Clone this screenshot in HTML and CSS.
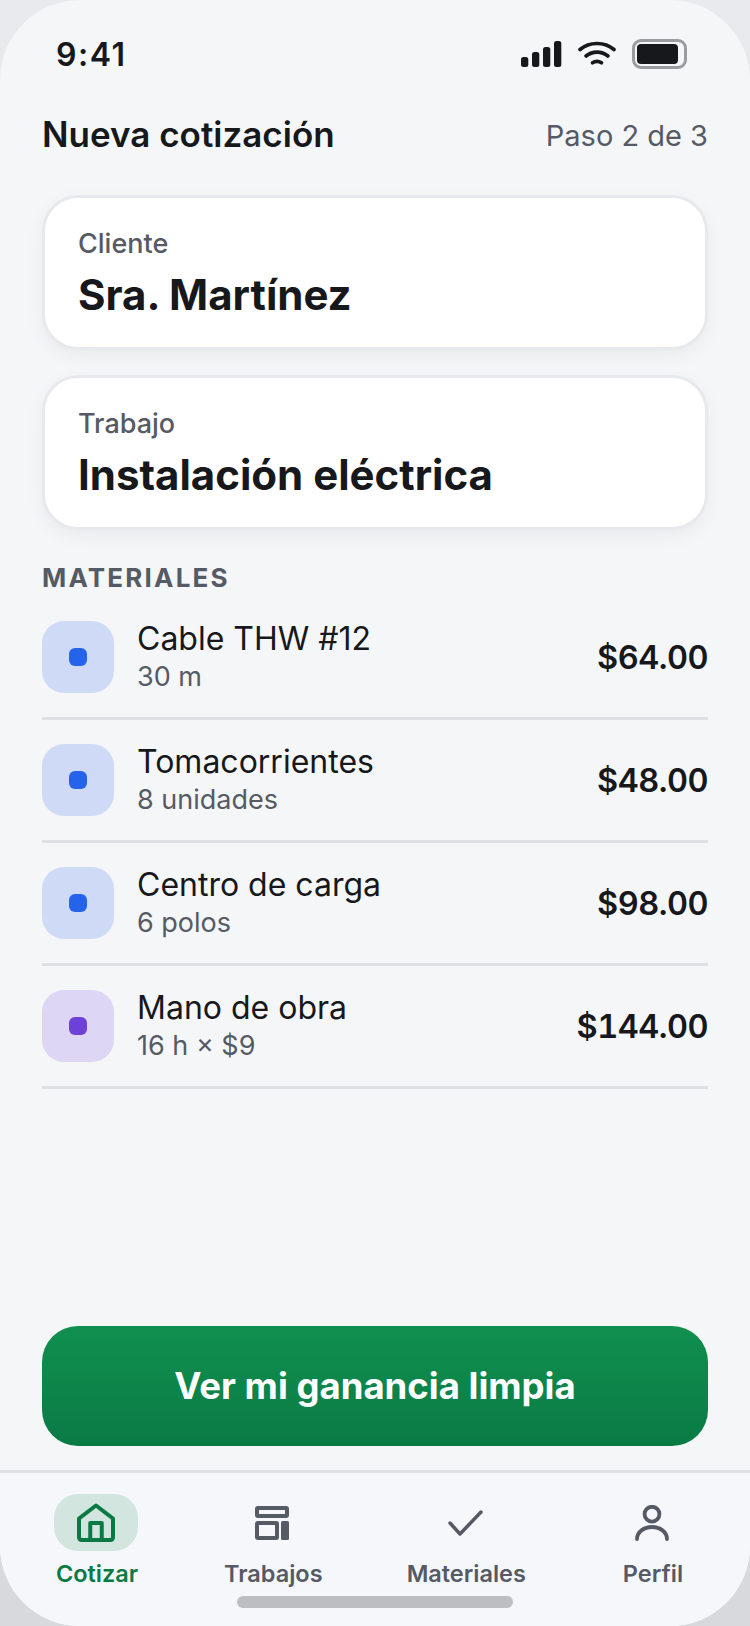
FILE: index.html

```html
<!DOCTYPE html>
<html lang="es">
<head>
    <meta charset="UTF-8">
    <meta name="viewport" content="width=device-width, initial-scale=1.0">
    <title>Nueva cotización</title>
    <link rel="stylesheet" href="styles.css">
</head>
<body>
    <div class="phone">
        <!-- Barra de estado -->
        <div class="status-bar">
            <span class="clock">9:41</span>
            <div class="status-icons">
                <svg width="42" height="26" viewBox="0 0 42 26" fill="#17181c">
                    <rect x="1" y="16" width="7.300" height="10" rx="2.500"/>
                    <rect x="12" y="11" width="7.300" height="15" rx="2.500"/>
                    <rect x="23" y="6" width="7.300" height="20" rx="2.500"/>
                    <rect x="34" y="0" width="7.300" height="26" rx="2.500"/>
                </svg>
                <svg width="38" height="26" viewBox="0 0 38 26" fill="none" stroke="#17181c" stroke-width="3.600" stroke-linecap="round">
                    <path d="M2 8.500C11.500 0.500 26.500 0.500 36 8.500"/>
                    <path d="M8 15C14.500 9.800 23.500 9.800 30 15"/>
                    <path d="M14.500 21.800C17.200 20 20.800 20 23.500 21.800"/>
                </svg>
                <div class="battery"><div class="battery-fill"></div></div>
            </div>
        </div>

        <div class="content">
            <div class="top-row">
                <h1>Nueva cotización</h1>
                <span class="step">Paso 2 de 3</span>
            </div>

            <div class="field-card">
                <div class="field-label">Cliente</div>
                <div class="field-value">Sra. Martínez</div>
            </div>
            <div class="field-card">
                <div class="field-label">Trabajo</div>
                <div class="field-value">Instalación eléctrica</div>
            </div>

            <h2>MATERIALES</h2>
            <div class="item">
                <div class="item-icon"><span class="item-dot"></span></div>
                <div class="item-text">
                    <div class="item-name">Cable THW #12</div>
                    <div class="item-sub">30 m</div>
                </div>
                <div class="item-price">$64.00</div>
            </div>
            <div class="item">
                <div class="item-icon"><span class="item-dot"></span></div>
                <div class="item-text">
                    <div class="item-name">Tomacorrientes</div>
                    <div class="item-sub">8 unidades</div>
                </div>
                <div class="item-price">$48.00</div>
            </div>
            <div class="item">
                <div class="item-icon"><span class="item-dot"></span></div>
                <div class="item-text">
                    <div class="item-name">Centro de carga</div>
                    <div class="item-sub">6 polos</div>
                </div>
                <div class="item-price">$98.00</div>
            </div>
            <div class="item">
                <div class="item-icon labor"><span class="item-dot"></span></div>
                <div class="item-text">
                    <div class="item-name">Mano de obra</div>
                    <div class="item-sub">16 h × $9</div>
                </div>
                <div class="item-price">$144.00</div>
            </div>

            <button class="main-button">Ver mi ganancia limpia</button>
        </div>

        <!-- Navegación inferior -->
        <nav class="tab-bar">
            <div class="tab active">
                <div class="tab-icon">
                    <svg width="42" height="39" viewBox="0 0 42 39" fill="none" stroke="#0a7a45" stroke-width="4" stroke-linejoin="round">
                        <path d="M21 2.500L38 15.500V34Q38 37 35 37H7Q4 37 4 34V15.500Z"/>
                        <path d="M15.250 37V20H26.750V37"/>
                    </svg>
                </div>
                <span>Cotizar</span>
            </div>
            <div class="tab">
                <div class="tab-icon">
                    <svg width="34" height="34" viewBox="0 0 34 34" fill="none" stroke="#565a65" stroke-width="4">
                        <rect x="2" y="2" width="30" height="8" rx="1"/>
                        <rect x="2" y="17" width="20" height="15" rx="1"/>
                        <rect x="26" y="15" width="8" height="19" rx="1.500" fill="#565a65" stroke="none"/>
                    </svg>
                </div>
                <span>Trabajos</span>
            </div>
            <div class="tab">
                <div class="tab-icon">
                    <svg width="36" height="36" viewBox="0 0 36 36" fill="none" stroke="#565a65" stroke-width="3.500" stroke-linecap="round" stroke-linejoin="round">
                        <path d="M3 18L13 29L34 7"/>
                    </svg>
                </div>
                <span>Materiales</span>
            </div>
            <div class="tab">
                <div class="tab-icon">
                    <svg width="34" height="36" viewBox="0 0 34 36" fill="none" stroke="#565a65" stroke-width="3.800" stroke-linecap="round">
                        <circle cx="17" cy="9.200" r="7.400"/>
                        <path d="M2 34C2 27 9 22 17 22S32 27 32 34"/>
                    </svg>
                </div>
                <span>Perfil</span>
            </div>
            <div class="home-bar"></div>
        </nav>
    </div>
</body>
</html>
```

FILE: styles.css

```css
html, body {
    margin: 0;
    padding: 0;
}
body {
    width: 750px;
    height: 1626px;
    overflow: hidden;
    background: linear-gradient(#e9eaed, #d8d9dd);
    font-family: 'Inter', sans-serif;
    color: #17181c;
}
.phone {
    width: 750px;
    height: 1626px;
    background-color: #f4f6f8;
    border-radius: 80px;
    overflow: hidden;
    display: flex;
    flex-direction: column;
}
.status-bar {
    display: flex;
    justify-content: space-between;
    align-items: center;
    height: 54px;
    padding: 27px 63px 0 56px;
}
.clock {
    font-size: 32px;
    font-weight: 600;
    letter-spacing: 1.500px;
}
.status-icons {
    display: flex;
    align-items: center;
    gap: 16px;
}
.battery {
    width: 55px;
    height: 30px;
    box-sizing: border-box;
    border: 3px solid #9a9ca0;
    border-radius: 9px;
    padding: 2px 6px 2px 2px;
}
.battery-fill {
    height: 100%;
    background-color: #17181c;
    border-radius: 4px;
}
.content {
    flex: 1;
    display: flex;
    flex-direction: column;
    padding: 0 42px;
}
.top-row {
    display: flex;
    justify-content: space-between;
    align-items: center;
    margin-top: 30px;
    height: 46px;
}
h1 {
    margin: 0;
    font-size: 35px;
    font-weight: 600;
}
.step {
    padding-top: 3px;
    font-size: 29px;
    color: #565a65;
}
.field-card {
    height: 155px;
    box-sizing: border-box;
    margin-top: 38px;
    padding: 29px 33px 0;
    background-color: #fff;
    border: 3px solid #e8e9ec;
    border-radius: 36px;
    box-shadow: 0 6px 18px rgba(0, 0, 0, 0.05);
}
.field-card + .field-card {
    margin-top: 25px;
}
.field-label {
    font-size: 27px;
    font-weight: 500;
    color: #565a65;
}
.field-value {
    margin-top: 9px;
    font-size: 42px;
    font-weight: 700;
}
h2 {
    margin: 32px 0 4px;
    font-size: 26px;
    font-weight: 700;
    letter-spacing: 2.200px;
    color: #565a65;
}
.item {
    display: flex;
    align-items: center;
    height: 120px;
    border-bottom: 3px solid #dfe0e3;
}
.item-icon {
    width: 72px;
    height: 72px;
    border-radius: 22px;
    background-color: #cfdbf6;
    display: flex;
    align-items: center;
    justify-content: center;
}
.item-dot {
    width: 18px;
    height: 18px;
    border-radius: 6px;
    background-color: #2563eb;
}
.item-icon.labor {
    background-color: #ddd6f4;
}
.item-icon.labor .item-dot {
    background-color: #6d40d8;
}
.item-text {
    flex: 1;
    margin-left: 23px;
    padding-bottom: 2px;
}
.item-name {
    font-size: 32px;
}
.item-sub {
    margin-top: 2px;
    font-size: 27px;
    color: #565a65;
}
.item-price {
    font-size: 32.500px;
    font-weight: 600;
    font-variant-numeric: tabular-nums;
    letter-spacing: -0.500px;
}
.main-button {
    margin-top: auto;
    margin-bottom: 24px;
    height: 120px;
    border: none;
    border-radius: 36px;
    background: linear-gradient(#10904f, #0a7a45);
    color: #fff;
    font-family: inherit;
    font-size: 36.500px;
    font-weight: 700;
}
.tab-bar {
    position: relative;
    display: flex;
    justify-content: space-around;
    height: 156px;
    box-sizing: border-box;
    border-top: 3px solid #dfe0e3;
    padding: 21px 12px 0;
    background-color: #f5f7fb;
}
.tab {
    display: flex;
    flex-direction: column;
    align-items: center;
    gap: 8px;
    font-size: 23.500px;
    font-weight: 600;
    color: #565a65;
}
.tab-icon {
    width: 84px;
    height: 57px;
    margin-right: 2px;
    border-radius: 24px;
    display: flex;
    align-items: center;
    justify-content: center;
}
.tab.active {
    color: #0a7a45;
}
.tab.active .tab-icon {
    background-color: #d2e5df;
}
.home-bar {
    position: absolute;
    left: 237px;
    bottom: 18px;
    width: 276px;
    height: 12px;
    border-radius: 6px;
    background-color: #bdbec2;
}
```
